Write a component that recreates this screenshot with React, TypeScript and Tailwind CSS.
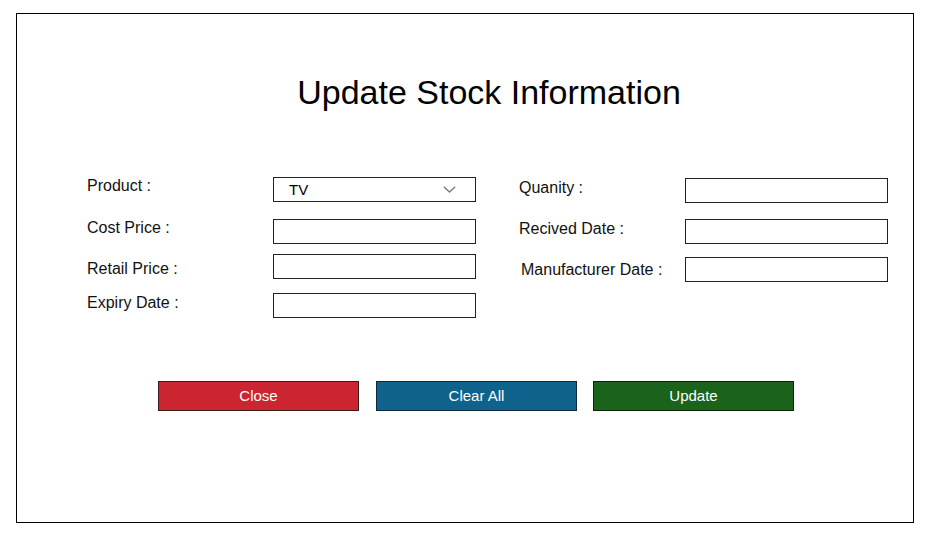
import React from "react";

const font = { fontFamily: '"Liberation Sans", Arial, sans-serif' };

function TextBox() {
  return <div className="w-[203px] h-[25px] border border-[#222] bg-white shrink-0" />;
}

function ProductSelect() {
  return (
    <div className="w-[203px] h-[25px] border border-[#222] bg-white shrink-0 flex items-center justify-between pl-[15px] pr-[19px]">
      <span className="text-[15px] leading-[18px] text-black">TV</span>
      <svg width="13" height="7" viewBox="0 0 13 7" fill="none">
        <polyline points="0.8,0.8 6.5,6 12.2,0.8" stroke="#7a7a7a" strokeWidth="1.4" />
      </svg>
    </div>
  );
}

function Row({
  label,
  labelW,
  labelOffset = 0,
  indent = 0,
  children,
  className = "",
}: {
  label: string;
  labelW: string;
  labelOffset?: number;
  indent?: number;
  children: React.ReactNode;
  className?: string;
}) {
  return (
    <div className={`flex items-start ${className}`}>
      <div className={`${labelW} shrink-0`}>
        <div
          className="text-[16px] leading-[18px] text-[#111]"
          style={{ marginTop: labelOffset, marginLeft: indent }}
        >
          {label}
        </div>
      </div>
      {children}
    </div>
  );
}

export default function App() {
  return (
    <div className="w-[930px] h-[540px] bg-white pt-[13px] pl-[16px]" style={font}>
      <div className="w-[898px] h-[510px] border border-black">
        <h1 className="mt-[59px] pl-[48px] text-center text-[34px] leading-[39px] text-black">
          Update Stock Information
        </h1>

        <div className="mt-[65px] ml-[70px] flex items-start">
          <div className="flex flex-col">
            <Row label="Product :" labelW="w-[186px]" labelOffset={0}>
              <ProductSelect />
            </Row>
            <Row label="Cost Price :" labelW="w-[186px]" labelOffset={0} className="mt-[17px]">
              <TextBox />
            </Row>
            <Row label="Retail Price :" labelW="w-[186px]" labelOffset={6} className="mt-[10px]">
              <TextBox />
            </Row>
            <Row label="Expiry Date :" labelW="w-[186px]" labelOffset={1} className="mt-[14px]">
              <TextBox />
            </Row>
          </div>

          <div className="ml-[43px] mt-[1px] flex flex-col">
            <Row label="Quanity :" labelW="w-[166px]" labelOffset={1}>
              <TextBox />
            </Row>
            <Row label="Recived Date :" labelW="w-[166px]" labelOffset={1} className="mt-[16px]">
              <TextBox />
            </Row>
            <Row label="Manufacturer Date :" labelW="w-[166px]" labelOffset={4} indent={2} className="mt-[13px]">
              <TextBox />
            </Row>
          </div>
        </div>

        <div className="mt-[63px] ml-[141px] flex">
          <button className="w-[201px] h-[30px] bg-[#cb2532] border border-[#3a1a1c] text-white text-[15px]">
            Close
          </button>
          <button className="ml-[17px] w-[201px] h-[30px] bg-[#0f628c] border border-[#10263a] text-white text-[15px]">
            Clear All
          </button>
          <button className="ml-[16px] w-[201px] h-[30px] bg-[#1b631b] border border-[#0f240f] text-white text-[15px]">
            Update
          </button>
        </div>
      </div>
    </div>
  );
}
